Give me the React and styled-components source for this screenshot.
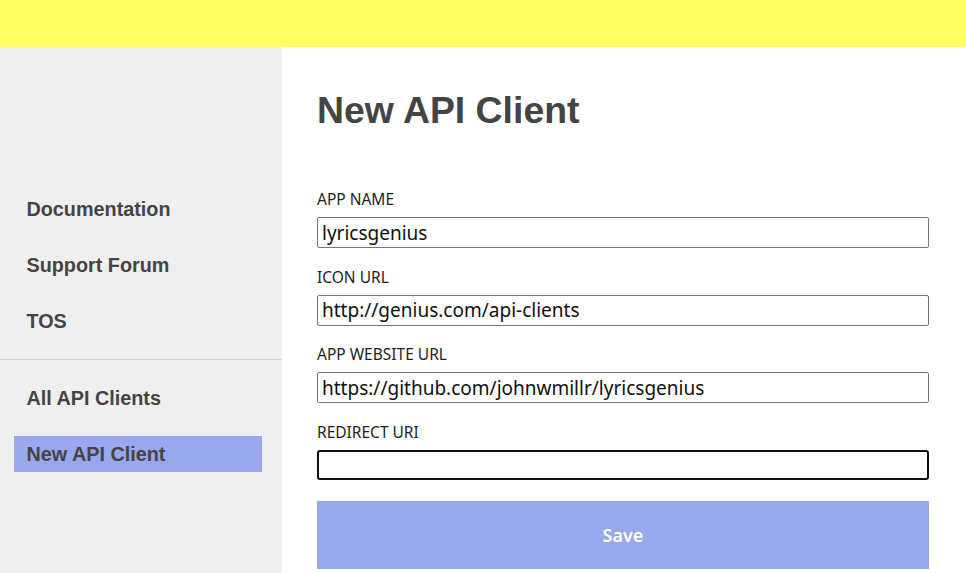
import React from "react";
import styled, { createGlobalStyle } from "styled-components";

const Global = createGlobalStyle`
  html, body { margin: 0; padding: 0; background: #fff; }
  body { font-family: "Liberation Sans", Arial, sans-serif; }
  * { box-sizing: border-box; }
`;

const TopBar = styled.header`
  height: 47px;
  background: #ffff64;
`;

const Body = styled.div`
  display: flex;
  min-height: 526px;
`;

const Sidebar = styled.nav`
  width: 282px;
  flex-shrink: 0;
  background: #efefef;
  padding-top: 144px;
  display: flex;
  flex-direction: column;
`;

const NavGroup = styled.div`
  display: flex;
  flex-direction: column;
  gap: 20px;
  padding: 0 20px 0 14px;
`;

const NavItem = styled.a`
  display: flex;
  align-items: center;
  height: 36px;
  padding-left: 12.5px;
  font-family: "Liberation Sans", Arial, sans-serif;
  font-weight: 700;
  font-size: 19.8px;
  color: #444;
  text-decoration: none;
  background: ${(p) => (p.$active ? "#99a7ee" : "transparent")};
`;

const Divider = styled.hr`
  border: 0;
  height: 1px;
  background: #d2d2d2;
  margin: 20px 0;
`;

const Main = styled.main`
  flex: 1;
  padding: 45px 0 0 35px;
`;

const Title = styled.h1`
  margin: 0;
  font-family: "Liberation Sans", Arial, sans-serif;
  font-weight: 700;
  font-size: 37.4px;
  line-height: 37px;
  color: #444;
`;

const Form = styled.form`
  width: 612px;
  margin-top: 60px;
  display: flex;
  flex-direction: column;
`;

const Field = styled.div`
  display: flex;
  flex-direction: column;
  margin-bottom: ${(p) => (p.$last ? "21px" : "18.5px")};
`;

const Label = styled.label`
  font-family: "Noto Sans", "Open Sans", sans-serif;
  font-size: 15.5px;
  line-height: 20px;
  color: #1e1e1e;
  margin-bottom: 8px;
`;

const Input = styled.input`
  height: ${(p) => (p.$focused ? "30px" : "31px")};
  width: 100%;
  padding: 0 4px;
  font-family: "Noto Sans", "Open Sans", sans-serif;
  font-size: 19px;
  color: #111;
  background: #fff;
  border: ${(p) => (p.$focused ? "2px solid #111" : "1px solid #767676")};
  border-radius: ${(p) => (p.$focused ? "3px" : "2px")};
  outline: none;
`;

const SaveButton = styled.button`
  height: 68px;
  width: 100%;
  border: 0;
  background: #99a7ee;
  color: #fff;
  font-family: "Noto Sans", "Open Sans", sans-serif;
  font-weight: 600;
  font-size: 18px;
  cursor: pointer;
`;

const fields = [
  { label: "APP NAME", value: "lyricsgenius" },
  { label: "ICON URL", value: "http://genius.com/api-clients" },
  { label: "APP WEBSITE URL", value: "https://github.com/johnwmillr/lyricsgenius" },
  { label: "REDIRECT URI", value: "", focused: true },
];

export default function App() {
  return (
    <>
      <Global />
      <TopBar />
      <Body>
        <Sidebar>
          <NavGroup>
            <NavItem href="#">Documentation</NavItem>
            <NavItem href="#">Support Forum</NavItem>
            <NavItem href="#">TOS</NavItem>
          </NavGroup>
          <Divider />
          <NavGroup>
            <NavItem href="#">All API Clients</NavItem>
            <NavItem href="#" $active>New API Client</NavItem>
          </NavGroup>
        </Sidebar>
        <Main>
          <Title>New API Client</Title>
          <Form onSubmit={(e) => e.preventDefault()}>
            {fields.map((f, i) => (
              <Field key={f.label} $last={i === fields.length - 1}>
                <Label>{f.label}</Label>
                <Input defaultValue={f.value} $focused={f.focused} />
              </Field>
            ))}
            <SaveButton type="submit">Save</SaveButton>
          </Form>
        </Main>
      </Body>
    </>
  );
}
